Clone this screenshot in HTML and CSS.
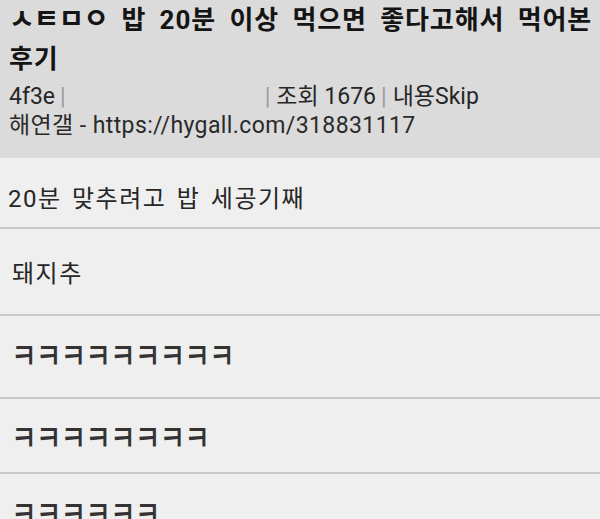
FILE: index.html
```html
<!DOCTYPE html>
<html lang="ko">
<head>
    <meta charset="UTF-8">
    <meta name="viewport" content="width=device-width, initial-scale=1.0">
    <title>해연갤</title>
    <link rel="stylesheet" href="styles.css">
</head>
<body>
    <div id="post">
        <div class="post-head">
            <h1 class="post-title"><span class="jamo">ㅅㅌㅁㅇ</span> 밥 20분 이상 먹으면 좋다고해서 먹어본 후기</h1>
            <div class="post-meta">
                <span>4f3e</span><span class="bar">|</span><span class="blank"></span><span class="bar">|</span><span>조회 1676</span><span class="bar">|</span><span>내용Skip</span>
            </div>
            <div class="post-src">해연갤 - https://hygall.com/318831117</div>
        </div>

        <ul class="comments">
            <li class="comment first">20분 맞추려고 밥 세공기째</li>
            <li class="comment tall">돼지추</li>
            <li class="comment"><span class="kk">ㅋㅋㅋㅋㅋㅋㅋㅋㅋ</span></li>
            <li class="comment short"><span class="kk">ㅋㅋㅋㅋㅋㅋㅋㅋ</span></li>
            <li class="comment"><span class="kk">ㅋㅋㅋㅋㅋㅋ</span></li>
        </ul>
    </div>
</body>
</html>
```

FILE: styles.css
```css
body {
    font-family: Roboto, "Noto Sans CJK KR", sans-serif;
    background-color: #efefef;
    color: #1e1e1e;
    margin: 0;
    padding: 0;
    overflow: hidden;
}
.post-head {
    background-color: #dbdbdb;
    padding: 0 4px 18px 9px;
}
.post-title {
    font-size: 26px;
    font-weight: bold;
    line-height: 39px;
    letter-spacing: 0.9px;
    word-spacing: 6px;
    margin: 0;
    color: #141414;
}
/* jamo are drawn wide and flat in the original font */
.jamo {
    font-size: 28px;
    letter-spacing: -1px;
}
.post-meta {
    display: flex;
    font-size: 23px;
    line-height: 28px;
    margin-top: 4px;
    color: #262626;
}
.bar {
    color: #9a9a9a;
    margin: 0 6px 0 5px;
}
.blank {
    width: 188px;
}
.post-src {
    font-size: 23px;
    line-height: 28px;
    letter-spacing: 0.4px;
    margin-top: 1px;
    color: #2a2a2a;
}
.comments {
    list-style: none;
    margin: 0;
    padding: 0;
}
.comment {
    display: flex;
    align-items: center;
    height: 81px;
    padding-left: 13px;
    font-size: 24px;
    letter-spacing: 1.5px;
    word-spacing: 3px;
    color: #262626;
    border-bottom: 2px solid #c9c9c9;
}
.comment.first {
    height: 62px;
    padding-top: 7px;
    padding-left: 8px;
}
.comment.tall {
    height: 85px;
    padding-left: 12px;
}
.comment.short {
    height: 67px;
    padding-top: 6px;
}
.kk {
    margin-left: -2px;
    font-size: 28px;
    font-weight: 500;
    letter-spacing: -1px;
    line-height: 1;
    color: #333;
    transform: scaleY(1.3);
}
```
